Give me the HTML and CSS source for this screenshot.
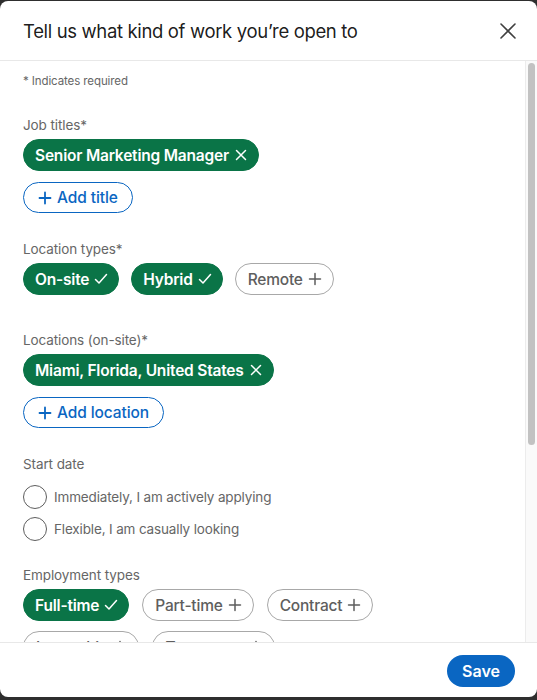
FILE: index.html
```html
<!DOCTYPE html>
<html lang="en">
<head>
<meta charset="utf-8">
<title>Open to work</title>
<link rel="stylesheet" href="styles.css">
</head>
<body>
<div class="modal">
  <header class="modal-header">
    <h2 class="modal-title">Tell us what kind of work you’re open to</h2>
    <button class="close" aria-label="Dismiss">
      <svg viewBox="0 0 24 24" width="24" height="24"><path d="M5 5 L19 19 M19 5 L5 19" stroke="#404040" stroke-width="1.6" fill="none" stroke-linecap="round"/></svg>
    </button>
  </header>
  <div class="modal-main">
    <div class="modal-body">
      <p class="req">* Indicates required</p>

      <section class="field f-jobs">
        <div class="label">Job titles*</div>
        <div class="pills">
          <span class="pill on">Senior Marketing Manager <svg class="ic" viewBox="0 0 16 16"><path d="M3.5 3.5 L12.5 12.5 M12.5 3.5 L3.5 12.5"/></svg></span>
        </div>
        <div class="pills add-row">
          <button class="pill add"><svg class="ic" viewBox="0 0 16 16"><path d="M8 2.5 V13.5 M2.5 8 H13.5"/></svg> Add title</button>
        </div>
      </section>

      <section class="field f-loctypes">
        <div class="label">Location types*</div>
        <div class="pills">
          <span class="pill on">On-site <svg class="ic" viewBox="0 0 16 16"><path d="M2.5 8.5 L6 12 L13.5 3.5"/></svg></span>
          <span class="pill on">Hybrid <svg class="ic" viewBox="0 0 16 16"><path d="M2.5 8.5 L6 12 L13.5 3.5"/></svg></span>
          <span class="pill off">Remote <svg class="ic" viewBox="0 0 16 16"><path d="M8 2.5 V13.5 M2.5 8 H13.5"/></svg></span>
        </div>
      </section>

      <section class="field f-locs">
        <div class="label">Locations (on-site)*</div>
        <div class="pills">
          <span class="pill on">Miami, Florida, United States <svg class="ic" viewBox="0 0 16 16"><path d="M3.5 3.5 L12.5 12.5 M12.5 3.5 L3.5 12.5"/></svg></span>
        </div>
        <div class="pills add-row">
          <button class="pill add"><svg class="ic" viewBox="0 0 16 16"><path d="M8 2.5 V13.5 M2.5 8 H13.5"/></svg> Add location</button>
        </div>
      </section>

      <section class="field f-start">
        <div class="label">Start date</div>
        <div class="radios">
          <label class="radio"><span class="circle"></span>Immediately, I am actively applying</label>
          <label class="radio"><span class="circle"></span>Flexible, I am casually looking</label>
        </div>
      </section>

      <section class="field f-emp">
        <div class="label">Employment types</div>
        <div class="pills emp">
          <span class="pill on">Full-time <svg class="ic" viewBox="0 0 16 16"><path d="M2.5 8.5 L6 12 L13.5 3.5"/></svg></span>
          <span class="pill off">Part-time <svg class="ic" viewBox="0 0 16 16"><path d="M8 2.5 V13.5 M2.5 8 H13.5"/></svg></span>
          <span class="pill off">Contract <svg class="ic" viewBox="0 0 16 16"><path d="M8 2.5 V13.5 M2.5 8 H13.5"/></svg></span>
          <span class="pill off">Internship <svg class="ic" viewBox="0 0 16 16"><path d="M8 2.5 V13.5 M2.5 8 H13.5"/></svg></span>
          <span class="pill off">Temporary <svg class="ic" viewBox="0 0 16 16"><path d="M8 2.5 V13.5 M2.5 8 H13.5"/></svg></span>
        </div>
      </section>
    </div>
    <div class="scrollbar" aria-hidden="true"><div class="thumb"></div></div>
  </div>
  <footer class="modal-footer">
    <button class="save">Save</button>
  </footer>
</div>
</body>
</html>
```
FILE: styles.css
```css
* { box-sizing: border-box; }
html, body { height: 100%; }
body {
  margin: 0;
  background: #2e2e2e;
  font-family: Inter, "Noto Sans", "Liberation Sans", sans-serif;
  color: rgba(0,0,0,0.9);
  padding-top: 1px;
}
.modal {
  height: 696px;
  background: #fff;
  border-radius: 8px;
  display: flex;
  flex-direction: column;
  overflow: hidden;
}
.modal-header {
  height: 60px;
  flex: none;
  display: flex;
  align-items: center;
  justify-content: space-between;
  padding: 0 17px 0 23px;
  border-bottom: 1px solid #e8e8e8;
}
.modal-title {
  margin: 0;
  font-size: 18.5px;
  font-weight: 400;
  color: rgba(0,0,0,0.9);
  letter-spacing: -0.35px;
}
.close {
  border: 0;
  background: none;
  padding: 0;
  width: 24px;
  height: 24px;
  display: flex;
}
.modal-main {
  flex: 1;
  min-height: 0;
  display: flex;
  border-bottom: 1px solid #e8e8e8;
}
.modal-body {
  flex: 1;
  min-width: 0;
  overflow: hidden;
  padding: 12px 12px 24px 23px;
}
.scrollbar {
  flex: none;
  width: 12px;
  background: #fafafa;
  border-left: 1px solid #ececec;
  padding: 2px 2px 0 2px;
}
.thumb {
  height: 382px;
  border-radius: 4px;
  background: #c2c2c2;
}
.req {
  margin: 0;
  font-size: 11.5px;
  line-height: 16px;
  color: #666;
  letter-spacing: -0.1px;
}
.field { margin-top: 26px; }
.f-locs { margin-top: 35px; }
.f-start { margin-top: 26px; }
.f-emp { margin-top: 24px; }
.label {
  font-size: 13.5px;
  line-height: 20px;
  color: #666;
  margin-bottom: 4px;
  letter-spacing: -0.1px;
}
.pills {
  display: flex;
  flex-wrap: wrap;
  gap: 11px 12px;
}
.pills.emp { gap: 10px 13px; max-width: 360px; }
.add-row { margin-top: 11px; }
.pill {
  display: inline-flex;
  align-items: center;
  gap: 4px;
  height: 32px;
  padding: 0 9px 0 11px;
  border-radius: 16px;
  font-family: inherit;
  font-size: 15.5px;
  font-weight: 600;
  letter-spacing: -0.2px;
  white-space: nowrap;
}
.pill .ic {
  width: 16px;
  height: 16px;
  fill: none;
  stroke: currentColor;
  stroke-width: 1.5;
  stroke-linecap: round;
  stroke-linejoin: round;
}
.pill.on {
  background: #0a7447;
  color: #fff;
  border: 1px solid #0a7447;
}
.pill.off {
  background: #fff;
  color: #5e5e5e;
  border: 1px solid #a8a8a8;
  padding: 0 10px 0 12px;
  font-weight: 500;
}
.pill.add {
  background: #fff;
  color: #0a66c2;
  border: 1px solid #0a66c2;
  height: 31px;
  padding: 0 14px 0 13px;
  font-weight: 500;
  letter-spacing: -0.1px;
  cursor: pointer;
}
.pill.add .ic { stroke-width: 1.8; }
.radios {
  margin-top: 11px;
  display: flex;
  flex-direction: column;
  gap: 8px;
}
.radio {
  display: flex;
  align-items: center;
  gap: 7px;
  font-size: 13.5px;
  letter-spacing: -0.15px;
  color: #666;
  height: 24px;
}
.circle {
  width: 24px;
  height: 24px;
  border-radius: 50%;
  border: 1.5px solid #5e5e5e;
  flex: none;
}
.modal-footer {
  flex: none;
  height: 54px;
  display: flex;
  justify-content: flex-end;
  padding: 12px 22px 0 0;
}
.save {
  height: 32px;
  padding: 0 15px;
  border: 0;
  border-radius: 16px;
  background: #0a66c2;
  color: #fff;
  font-family: inherit;
  font-size: 16px;
  font-weight: 600;
}
```
